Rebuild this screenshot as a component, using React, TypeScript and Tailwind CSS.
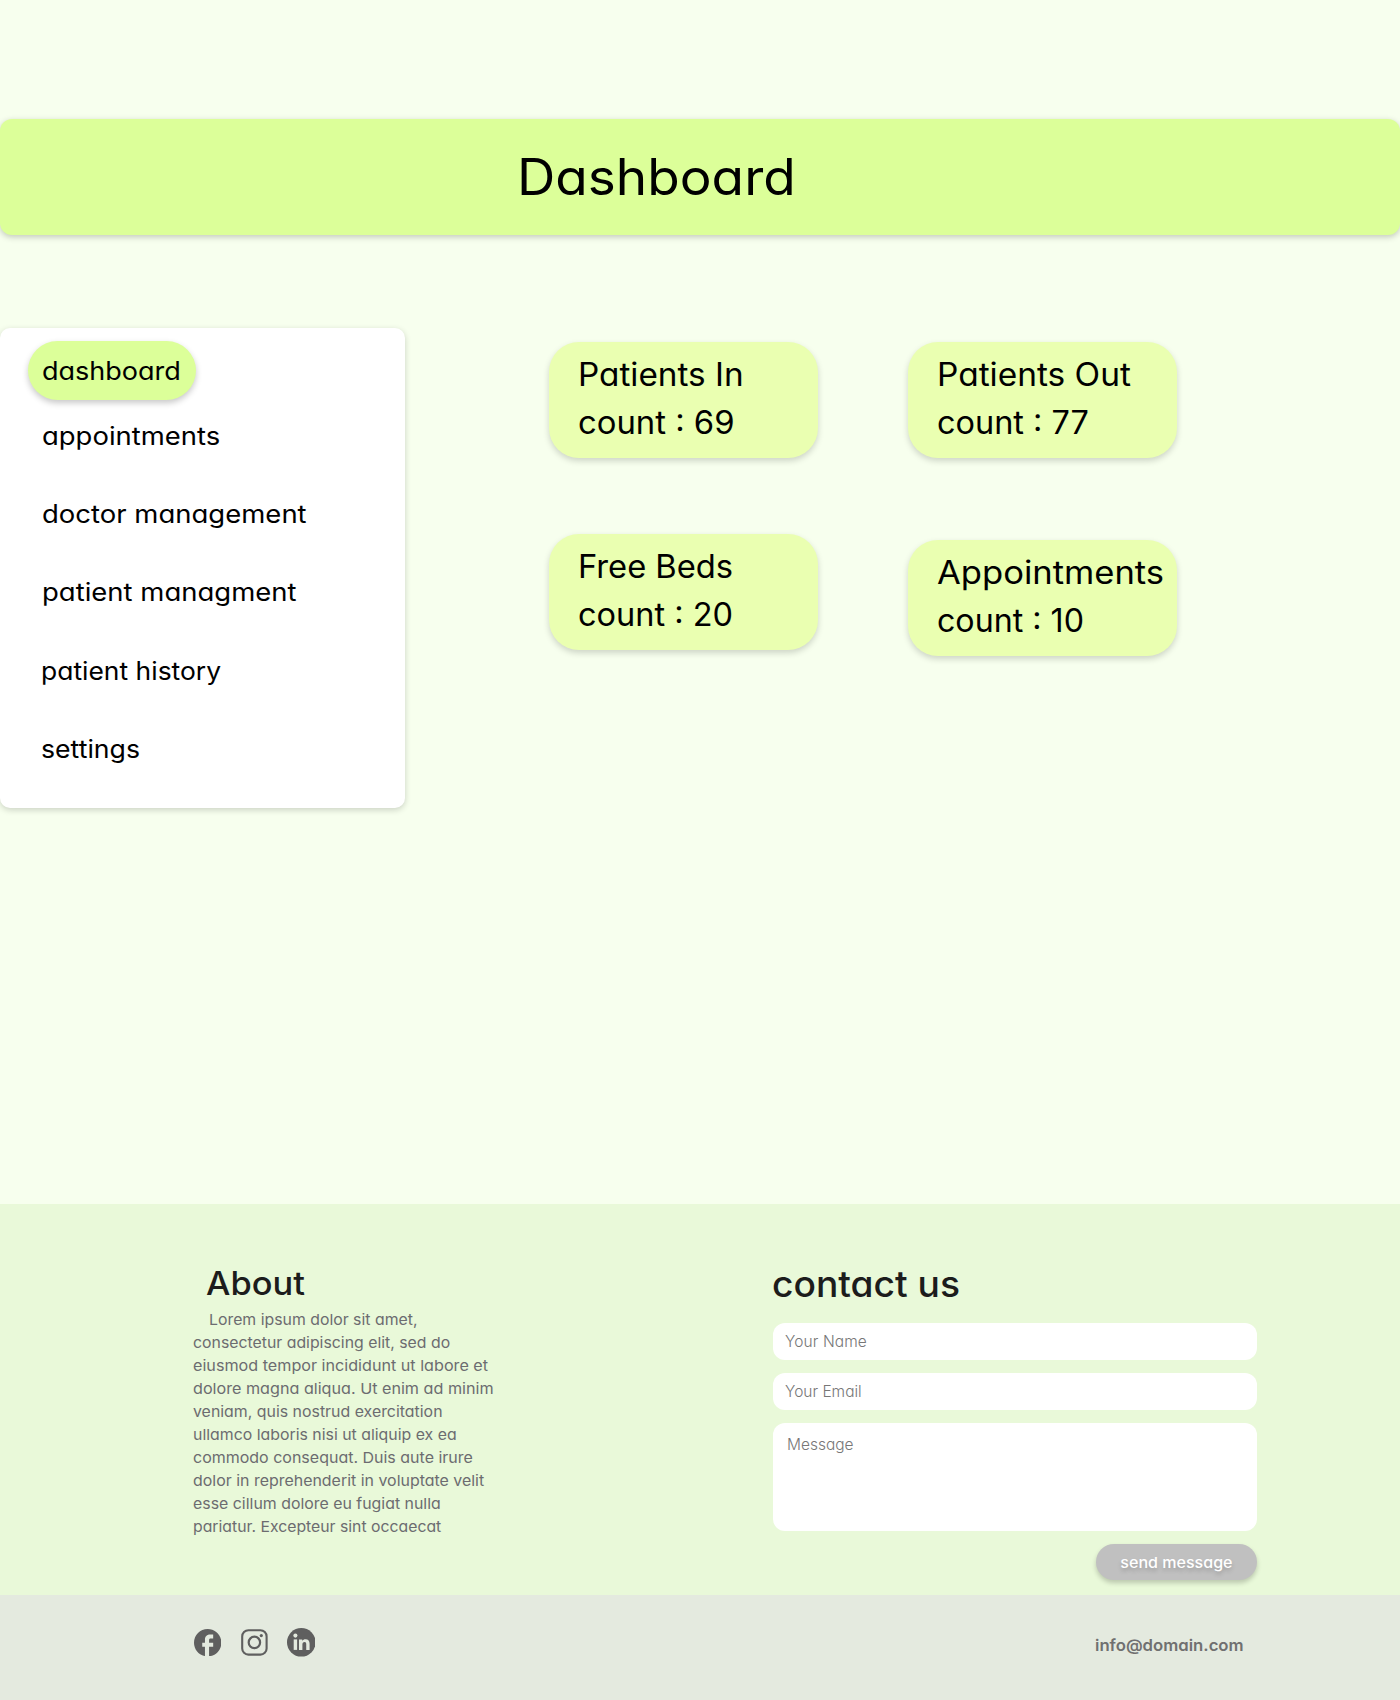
import React from "react";

const stats = [
  { title: "Patients In", count: "count : 69", place: "", titleCls: "scale-x-[1.04]", countCls: "scale-x-[1.025]" },
  { title: "Patients Out", count: "count : 77", place: "", titleCls: "scale-x-[1.045]", countCls: "scale-x-[1.014]" },
  { title: "Free Beds", count: "count : 20", place: "", titleCls: "scale-x-[1.021]", countCls: "scale-x-[1.015]" },
  { title: "Appointments", count: "count : 10", place: "mt-1.5", titleCls: "scale-x-[1.08]", countCls: "scale-x-[1.005]" },
];

const links = [
  { label: "appointments", cls: "ml-[41.5px] scale-x-[1.098]" },
  { label: "doctor management", cls: "ml-[41.5px] scale-x-[1.1]" },
  { label: "patient managment", cls: "ml-[41.5px] scale-x-[1.1]" },
  { label: "patient history", cls: "ml-[40.5px] mt-px scale-x-[1.058]" },
  { label: "settings", cls: "ml-[40.5px] scale-x-[1.066]" },
];

const about = [
  { text: "Lorem ipsum dolor sit amet,", cls: "ml-4 scale-x-[1.055]" },
  { text: "consectetur adipiscing elit, sed do", cls: "scale-x-[1.055]" },
  { text: "eiusmod tempor incididunt ut labore et", cls: "scale-x-[1.077]" },
  { text: "dolore magna aliqua. Ut enim ad minim", cls: "scale-x-[1.077]" },
  { text: "veniam, quis nostrud exercitation", cls: "scale-x-[1.059]" },
  { text: "ullamco laboris nisi ut aliquip ex ea", cls: "scale-x-[1.057]" },
  { text: "commodo consequat. Duis aute irure", cls: "scale-x-[1.066]" },
  { text: "dolor in reprehenderit in voluptate velit", cls: "scale-x-[1.062]" },
  { text: "esse cillum dolore eu fugiat nulla", cls: "scale-x-[1.059]" },
  { text: "pariatur. Excepteur sint occaecat", cls: "scale-x-[1.052]" },
];

function Facebook() {
  return (
    <svg className="ml-[194px] mt-[34px] h-[27.4px] w-[27.4px]" viewBox="2 2 20 20" fill="#5f5f5f">
      <path d="M22 12c0-5.52-4.48-10-10-10S2 6.480 2 12c0 4.840 3.440 8.870 8 9.800V15H8v-3h2V9.500C10 7.570 11.570 6 13.500 6H16v3h-2c-.55 0-1 .45-1 1v2h3v3h-3v6.950c5.050-.5 9-4.760 9-9.950z" />
    </svg>
  );
}

function Instagram() {
  return (
    <svg className="ml-[19.3px] mt-[34px] h-[27px] w-[27px]" viewBox="0 0 27 27" fill="none" stroke="#5f5f5f">
      <rect x="1.2" y="1.2" width="24.400" height="24.400" rx="6.200" strokeWidth="2.100" />
      <circle cx="13.400" cy="13.400" r="5.700" strokeWidth="2.200" />
      <circle cx="20.300" cy="6.600" r="1.600" fill="#5f5f5f" stroke="none" />
    </svg>
  );
}

function LinkedIn() {
  return (
    <svg className="ml-[19.2px] mt-[33px] h-[28.6px] w-[28.6px]" viewBox="0 0 28.6 28.6">
      <circle cx="14.300" cy="14.300" r="14.300" fill="#5f5f5f" />
      <g fill="#e4eadf">
        <circle cx="8.400" cy="7.600" r="2.050" />
        <path d="M6.700 11.400h3.400v10.500H6.700z" />
        <path d="M12 11.400h3.200v1.450c.7-1.100 1.900-1.700 3.300-1.700 2.900 0 4.100 1.700 4.100 4.700v6.050h-3.350v-5.500c0-1.500-.5-2.350-1.750-2.350-1.350 0-2.100.95-2.100 2.500v5.350H12z" />
      </g>
    </svg>
  );
}

export default function App() {
  return (
    <div className="flex h-[1700px] w-[1400px] flex-col overflow-hidden bg-[#f7ffee] font-['Inter','Liberation_Sans',sans-serif] text-black whitespace-nowrap [font-feature-settings:'cv11']">
      <header className="mt-[119px] flex h-[116px] shrink-0 items-start rounded-xl bg-[#dcff99] pl-[517px] pt-[21px] shadow-[0_2px_6px_rgba(0,0,0,0.22)]">
        <h1 className="origin-left scale-x-[1.062] text-[50px] leading-[75px]">Dashboard</h1>
      </header>

      <main className="mt-[93px] flex h-[876px] shrink-0 items-start">
        <nav className="flex h-[480px] w-[405px] flex-col items-start rounded-[10px] bg-white pt-[13px] text-[25px] leading-[38px] shadow-[0_2px_6px_rgba(0,0,0,0.18)]">
          <a className="ml-7 flex h-[59px] w-[168px] rounded-[30px] bg-[#dcff99] pl-[13.5px] pt-[11px] shadow-[0_3px_6px_rgba(0,0,0,0.22)]">
            <span className="h-[38px] origin-left scale-x-[1.08]">dashboard</span>
          </a>
          <div className="mt-[17px] flex flex-col items-start gap-10">
            {links.map((l) => (
              <a key={l.label} className={`origin-left ${l.cls}`}>{l.label}</a>
            ))}
          </div>
        </nav>
        <section className="ml-36 mt-3.5 grid grid-cols-[269px_269px] gap-x-[90px] gap-y-[76px]">
          {stats.map((s) => (
            <div key={s.title} className={`h-[116px] ${s.place}`}>
              <div className="flex h-[116px] flex-col items-start rounded-[30px] bg-[#eaffb1] pl-[28.5px] pt-[9px] text-[32px] leading-[48px] shadow-[0_3px_6px_rgba(0,0,0,0.17)]">
                <p className={`origin-left ${s.titleCls}`}>{s.title}</p>
                <p className={`origin-left ${s.countCls}`}>{s.count}</p>
              </div>
            </div>
          ))}
        </section>
      </main>

      <section className="flex h-[391px] shrink-0 items-start bg-[#e9f9d9] text-[15px] leading-[23px]">
        <div className="ml-48 flex w-[581px] flex-col items-start pt-14">
          <h2 className="ml-[13.5px] origin-left scale-x-[1.075] text-[32px] font-medium leading-[48px] text-[#1c1c1c]">About</h2>
          <div className="ml-[0.5px] flex flex-col items-start text-[#6c6c70]">
            {about.map((l) => (
              <p key={l.text} className={`origin-left ${l.cls}`}>{l.text}</p>
            ))}
          </div>
        </div>
        <form className="flex w-[484px] flex-col pt-[53px]">
          <h2 className="-ml-px origin-left self-start scale-x-[1.033] text-[36px] font-medium leading-[54px] text-[#1c1c1c]">contact us</h2>
          <input placeholder="Your Name" className="mt-3 h-[37px] rounded-xl bg-white pl-3 text-[15.5px] font-light tracking-[0.1px] placeholder:text-[#777777]" />
          <input placeholder="Your Email" className="mt-[13px] h-[37px] rounded-xl bg-white pl-3 text-[15.5px] font-light placeholder:text-[#777777]" />
          <textarea placeholder="Message" className="mt-[13px] h-[108px] resize-none rounded-xl bg-white pl-3.5 pt-2.5 text-[15.5px] font-light placeholder:text-[#777777]" />
          <button type="button" className="mt-[13px] h-9 w-[161px] self-end rounded-[18px] bg-[#c0c0c0] font-medium text-white shadow-[0_3px_5px_rgba(0,0,0,0.2)]">
            <span className="inline-block scale-x-[1.07] [text-shadow:0_3px_4px_rgba(0,0,0,0.2)]">send message</span>
          </button>
        </form>
      </section>

      <footer className="flex h-[105px] shrink-0 items-start bg-[#e4eadf]">
        <Facebook />
        <Instagram />
        <LinkedIn />
        <p className="ml-[779.5px] mt-[38px] origin-left scale-x-[1.045] text-base font-semibold text-[#707070]">info@domain.com</p>
      </footer>
    </div>
  );
}
